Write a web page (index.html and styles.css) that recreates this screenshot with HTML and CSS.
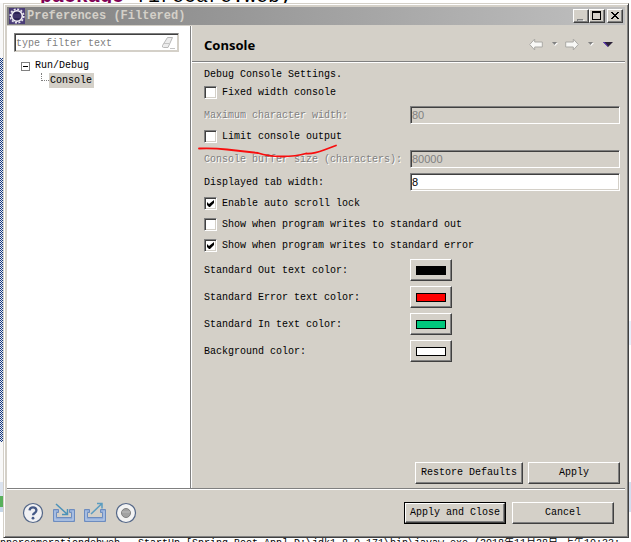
FILE: index.html
```html
<!DOCTYPE html>
<html lang="en">
<head>
<meta charset="utf-8">
<title>Preferences (Filtered)</title>
<link rel="stylesheet" href="styles.css">
</head>
<body>
<div class="strip strip-top"><span class="code"><b>package</b> firecare.web;</span></div>
<div class="middle">
  <div class="edge edge-left"></div>
  <main class="dialog">
    <header class="titlebar">
      <svg class="app-icon" width="16" height="16" viewBox="0 0 16 16" aria-hidden="true">
        <rect width="16" height="16" fill="#4b3d78"/>
        <circle cx="8" cy="8" r="6.8" fill="none" stroke="#e8e6ee" stroke-width="1.6" stroke-dasharray="2 1.56"/>
        <circle cx="8" cy="8" r="5.3" fill="#2c2255" stroke="#f4f2f6" stroke-width="1.6"/>
        <path d="M4 7h8M4 9h8" stroke="#51447d"/>
      </svg>
      <h1 class="title">Preferences (Filtered)</h1>
      <div class="window-buttons">
        <button class="bevel win" type="button" aria-label="Minimize"><svg width="12" height="10" viewBox="0 0 12 10"><path d="M2 8h6v2H2z" fill="#808080"/><path d="M3 10h6V9" fill="none" stroke="#fff"/></svg></button>
        <button class="bevel win" type="button" aria-label="Maximize"><svg width="12" height="10" viewBox="0 0 12 10"><path d="M1 0h9v9H1zM2 2v6h7V2z" fill="#000" fill-rule="evenodd"/></svg></button>
        <button class="bevel win win-close" type="button" aria-label="Close"><svg width="12" height="10" viewBox="0 0 12 10"><path d="M2 1h2v1h1v1h2V2h1V1h2v1H9v1H8v1H7v1h1v1h1v1h1v1H8V7H7V6H5v1H4v1H2V7h1V6h1V5h1V4H4V3H3V2H2z"/></svg></button>
      </div>
    </header>
    <div class="content">
      <nav class="sidebar">
        <div class="filter field">
          <input type="text" aria-label="Filter" placeholder="type filter text">
          <button class="clear" type="button" aria-label="Clear filter"><svg width="15" height="14" viewBox="0 0 15 14"><path d="M6.5 1.5h5l-4.500 10H2.500Q1 11.500 1.500 9.500z" fill="#ececec" stroke="#b8b8b8"/><path d="M3 7.500h5M9 12.500h5" stroke="#c4c4c4" fill="none"/></svg></button>
        </div>
        <ul class="tree">
          <li>
            <button class="node" type="button" aria-expanded="true"><span class="toggle"></span>Run/Debug</button>
            <ul class="branch"><li><span class="elbow"></span><a class="leaf" href="#page">Console</a></li></ul>
          </li>
        </ul>
      </nav>
      <section class="page" id="page">
        <div class="page-head">
          <h2>Console</h2>
          <div class="page-nav">
            <button type="button" aria-label="Back"><svg width="14" height="13" viewBox="0 0 14 13"><path d="M.7 6.500l5-5.500v3h7.600v5H5.700v3z" fill="#f8f8f6" stroke="#aaa9a5" stroke-linejoin="round"/></svg></button>
            <button class="drop" type="button" aria-label="Back history"><svg width="6" height="4" viewBox="0 0 6 4"><path d="M1 1h5L3 4z" fill="#fff"/><path d="M0 0h5L2.500 3z" fill="#808080"/></svg></button>
            <button type="button" aria-label="Forward"><svg width="14" height="13" viewBox="0 0 14 13"><path d="M13.300 6.500l-5-5.500v3H.7v5h7.600v3z" fill="#f8f8f6" stroke="#aaa9a5" stroke-linejoin="round"/></svg></button>
            <button class="drop" type="button" aria-label="Forward history"><svg width="6" height="4" viewBox="0 0 6 4"><path d="M1 1h5L3 4z" fill="#fff"/><path d="M0 0h5L2.500 3z" fill="#808080"/></svg></button>
            <button class="menu" type="button" aria-label="Menu"><svg width="10" height="5" viewBox="0 0 10 5"><path d="M0 0h10L5 5z" fill="#2b2238"/><path d="M0 0h1.500l3.500 4v1z" fill="#5b2fc0"/></svg></button>
          </div>
        </div>
        <form class="form">
          <p class="wide intro">Debug Console Settings.</p>
          <label class="wide check"><input type="checkbox">Fixed width console</label>
          <label class="name off" for="maxw">Maximum character width:</label>
          <input class="field" id="maxw" type="text" value="80" disabled>
          <label class="wide check"><input type="checkbox">Limit console output</label>
          <label class="name off" for="buf">Console buffer size (characters):</label>
          <input class="field" id="buf" type="text" value="80000" disabled>
          <label class="name" for="tab">Displayed tab width:</label>
          <input class="field" id="tab" type="text" value="8">
          <label class="wide check"><input type="checkbox" checked>Enable auto scroll lock</label>
          <label class="wide check"><input type="checkbox">Show when program writes to standard out</label>
          <label class="wide check"><input type="checkbox" checked>Show when program writes to standard error</label>
          <label class="name" for="c-out">Standard Out text color:</label>
          <button class="bevel color" id="c-out" type="button"><span class="swatch black"></span></button>
          <label class="name" for="c-err">Standard Error text color:</label>
          <button class="bevel color" id="c-err" type="button"><span class="swatch red"></span></button>
          <label class="name" for="c-in">Standard In text color:</label>
          <button class="bevel color" id="c-in" type="button"><span class="swatch green"></span></button>
          <label class="name" for="c-bg">Background color:</label>
          <button class="bevel color" id="c-bg" type="button"><span class="swatch white"></span></button>
          <svg class="mark" width="144" height="16" viewBox="0 0 144 16" aria-hidden="true"><path d="M3 4.500Q18 4 31 5.500T62 9Q72 12.500 86 12.500T110 9.500Q118 10 128 6L140 1.500" fill="none" stroke="#f80d0d" stroke-width="1.800" stroke-linecap="round"/></svg>
        </form>
        <div class="page-actions">
          <button class="bevel push restore" type="button">Restore Defaults</button>
          <button class="bevel push apply" type="button">Apply</button>
        </div>
      </section>
    </div>
    <footer class="footer">
      <div class="tools">
        <button type="button" aria-label="Help"><svg width="22" height="22" viewBox="0 0 22 22"><circle cx="11" cy="11" r="9.500" fill="#f1f1f3" stroke="#536687" stroke-width="1.200"/><path d="M7.600 8.300Q7.800 5.300 11 5.300t3.400 2.900q0 1.700-1.700 2.800T11 13.300" fill="none" stroke="#465a87" stroke-width="2.300"/><circle cx="11" cy="16.200" r="1.400" fill="#465a87"/></svg></button>
        <button type="button" aria-label="Import"><svg width="22" height="22" viewBox="0 0 22 22"><path d="M.5 7.500h5v3h-2v5h15v-5h-2v-3h5v12H.5z" fill="#93aed9" stroke="#6d8cbf"/><path d="M2 9v9h18V9" fill="none" stroke="#b9cbe8"/><path d="M3 2l11 10M14.500 7v5.500H9" fill="none" stroke="#4d92b8" stroke-width="1.500"/></svg></button>
        <button type="button" aria-label="Export"><svg width="22" height="22" viewBox="0 0 22 22"><path d="M.5 7.500h5v3h-2v5h15v-5h-2v-3h5v12H.5z" fill="#93aed9" stroke="#6d8cbf"/><path d="M2 9v9h18V9" fill="none" stroke="#b9cbe8"/><path d="M7 12L17.500 2M13 1.500h5V6.500" fill="none" stroke="#5b9cc0" stroke-width="1.500"/></svg></button>
        <button type="button" aria-label="Record"><svg width="22" height="22" viewBox="0 0 22 22"><circle cx="11" cy="11" r="9.500" fill="#f3f3f3" stroke="#536687" stroke-width="1.200"/><circle cx="11" cy="11" r="4.500" fill="#a2a2a2" stroke="#808080"/><path d="M7 10h8" stroke="#bcbcbc"/></svg></button>
      </div>
      <div class="actions">
        <button class="default" type="button"><span class="bevel">Apply and Close</span></button>
        <button class="bevel push cancel" type="button">Cancel</button>
      </div>
    </footer>
  </main>
  <div class="edge edge-right"></div>
</div>
<div class="strip strip-bottom"><span class="log">nnercomerationdebweb - StartUp [Spring Boot App] D:\jdk1.8.0_171\bin\javaw.exe (2018年11月28日 上午10:33:</span></div>
</body>
</html>
```

FILE: styles.css
```css
:root {
  --face: #d4d0c8;
  --shade: #808080;
  --dark: #404040;
}

* { box-sizing: border-box; }

body {
  margin: 0;
  height: 100vh;
  display: flex;
  flex-direction: column;
  overflow: hidden;
  background: #fff;
  color: #000;
  font: 10px/12px "Liberation Mono", "Noto Sans CJK SC", monospace;
}

h1, h2, p, ul { margin: 0; padding: 0; }
ul { list-style: none; }

button {
  margin: 0;
  padding: 0;
  border: 0;
  background: none;
  color: inherit;
  font: inherit;
}

svg { display: block; }

/* Windows behind the dialog */
.strip { flex: none; overflow: hidden; white-space: pre; }
.strip-top { height: 3px; display: flex; align-items: flex-end; padding-left: 40px; }
.code { font-size: 20px; line-height: 12px; }
.code b { color: #7f0055; }
.strip-bottom { height: 4px; }
.log { display: block; }
.middle { flex: 1; min-height: 0; display: flex; }
.edge { flex: none; }
.edge-left {
  width: 3px;
  background: linear-gradient(#f8f8f8 55px, #0000 55px 439px, #f8f8f8 439px 479px, #dbe3ef 479px 493px, #58b05c 493px 504px, #c6d7e8 504px 509px, #fff 509px),
    repeating-conic-gradient(#16387c 0 25%, #e8ecf4 0 50%) 0 0 / 2px 2px;
}
.edge-right { width: 2px; background: linear-gradient(#fff 318px, #e8f0fb 318px 342px, #fff 342px 479px, #d5dfef 479px 509px, #fff 509px); }

/* Dialog frame */
.dialog {
  flex: 1;
  min-width: 0;
  display: flex;
  flex-direction: column;
  padding: 3px;
  background: var(--face);
  border: 1px solid;
  border-color: var(--face) var(--dark) var(--dark) var(--face);
  box-shadow: inset 1px 1px #fff, inset -1px -1px var(--shade);
}

.titlebar {
  flex: none;
  height: 18px;
  margin-bottom: 1px;
  display: flex;
  align-items: center;
  padding: 0 2px;
  background: linear-gradient(90deg, #808080, #c0c0c0);
}
.title { flex: 1; padding-left: 2px; color: var(--face); font-size: 12px; line-height: 16px; }
.window-buttons { display: flex; }

.bevel {
  background: var(--face);
  border: 1px solid;
  border-color: #fff var(--dark) var(--dark) #fff;
  box-shadow: inset -1px -1px var(--shade);
}
.win { width: 16px; height: 14px; padding: 1px; }
.win-close { margin-left: 2px; }

.content { flex: 1; min-height: 0; display: flex; border-bottom: 1px solid var(--shade); }

/* Sidebar */
.sidebar { flex: none; width: 184px; padding: 7px; background: #fff; border-right: 1px solid var(--shade); }

.field {
  width: 100%;
  margin: 0;
  background: #fff;
  border: 1px solid;
  border-color: var(--shade) #fff #fff var(--shade);
  box-shadow: inset 1px 1px var(--dark), inset -1px -1px var(--face);
}
.filter { display: flex; align-items: center; width: 165px; height: 19px; padding: 2px 2px 2px 1px; border-color: var(--shade) var(--face) var(--face) var(--shade); }
.filter input { flex: 1; min-width: 0; padding: 2px 0 0; border: 0; background: none; font: inherit; outline: none; }
.filter input::placeholder { color: var(--shade); opacity: 1; }

.tree { padding: 7px 0 0 7px; }
.node { display: flex; align-items: center; gap: 5px; height: 14px; }
.toggle { width: 9px; height: 9px; border: 1px solid var(--shade); background: linear-gradient(#000, #000) center / 5px 1px no-repeat; }
.branch li { display: flex; padding-left: 20px; }
.elbow { width: 8px; height: 8px; border: 1px dotted var(--shade); border-width: 0 0 1px 1px; }
.leaf { padding: 2px 2px 2px 1px; line-height: 11px; background: var(--face); color: #000; text-decoration: none; }

/* Preference page */
.page { flex: 1; min-width: 0; display: flex; flex-direction: column; border-left: 1px solid #fff; }
.page-head {
  flex: none;
  height: 36px;
  display: flex;
  align-items: center;
  justify-content: space-between;
  padding: 1px 12px 0;
  border-bottom: 1px solid var(--shade);
  box-shadow: 0 1px #fff;
}
.page-head h2 { padding-top: 1px; font: bold 13px/18px "Noto Sans", "Open Sans", sans-serif; }
.page-nav { display: flex; align-items: center; gap: 9px; }
.page-nav .drop { margin-right: -2px; }
.page-nav .menu { margin-left: 2px; }

.form {
  position: relative;
  display: grid;
  grid-template-columns: 206px 1fr;
  align-items: center;
  row-gap: 5px;
  padding: 6px 5px 0 12px;
}
.wide { grid-column: 1 / -1; }
.intro { height: 12px; line-height: 14px; }
.name { padding-top: 2px; }
.check { display: flex; align-items: center; gap: 5px; height: 16px; justify-self: start; }
.off { color: var(--shade); text-shadow: 1px 1px #fff; }
.form .field { height: 18px; padding: 0 1px; font: 11px/14px "Liberation Sans", sans-serif; color: #000; }
.form .field:disabled { background: var(--face); color: var(--shade); }

.check input {
  appearance: none;
  width: 13px;
  height: 13px;
  margin: 0 0 1px;
  background: #fff;
  border: 1px solid;
  border-color: var(--shade) #fff #fff var(--shade);
  box-shadow: inset 1px 1px var(--dark), inset -1px -1px var(--face);
}
.check input:checked::before {
  content: "";
  display: block;
  width: 7px;
  height: 7px;
  margin: 2px;
  background: #000;
  clip-path: polygon(0 2px, 2px 4px, 7px 0, 7px 3px, 3px 7px, 2px 7px, 0 5px);
}

.color { width: 42px; height: 22px; padding: 5px; }
.swatch { display: block; width: 30px; height: 9px; border: 1px solid #000; }
.black { background: #000; }
.red { background: #f00; }
.green { background: #00c87d; }
.white { background: #fff; }

/* Hand-drawn underline across the form */
.mark { position: absolute; left: 4px; top: 82px; }

.page-actions { display: flex; justify-content: flex-end; gap: 5px; margin-top: auto; padding: 0 5px 4px; }
.push { height: 22px; }
.restore { width: 108px; }
.apply { width: 92px; }

/* Footer */
.footer {
  flex: none;
  display: flex;
  align-items: center;
  justify-content: space-between;
  height: 45px;
  padding: 1px 11px 0 15px;
  border-top: 1px solid #fff;
}
.tools { display: flex; gap: 9px; }
.actions { display: flex; gap: 6px; }
.default { width: 102px; height: 22px; display: flex; border: 1px solid #000; }
.default .bevel { flex: 1; line-height: 18px; }
.cancel { width: 102px; }
```
